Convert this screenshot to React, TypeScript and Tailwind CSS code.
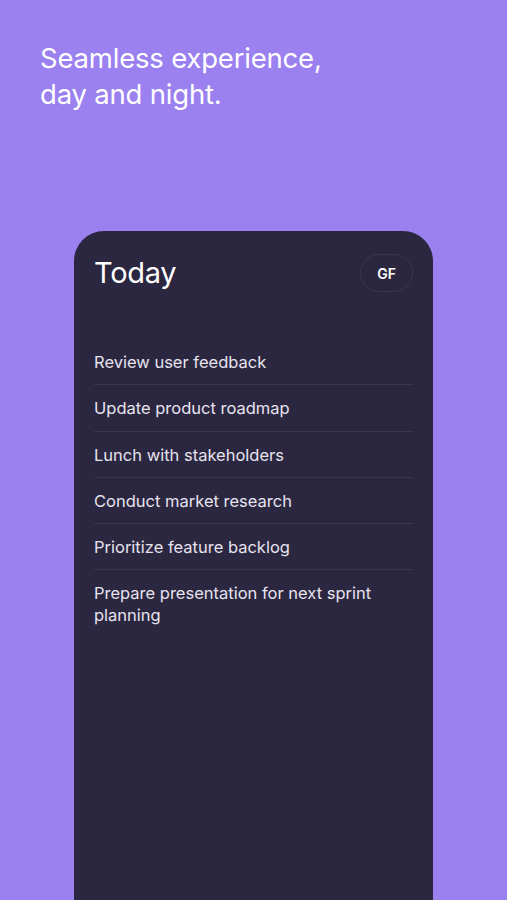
import React from 'react';

const tasks = [
    'Review user feedback',
    'Update product roadmap',
    'Lunch with stakeholders',
    'Conduct market research',
    'Prioritize feature backlog',
    'Prepare presentation for next sprint planning',
];

const App: React.FC = () => {
    return (
        <div
            className="min-h-[900px] h-[900px] overflow-hidden bg-[#9b80f0] flex flex-col"
            style={{ fontFamily: 'Inter, "Noto Sans", sans-serif' }}
        >
            <h1 className="pl-10 pt-[40px] text-[27.5px] leading-[36px] font-normal tracking-[-0.2px] text-white">
                Seamless experience,
                <br />
                day and night.
            </h1>
            <div className="mt-[119px] ml-[74px] w-[359px] flex-1 rounded-t-[30px] bg-[#2c2740] px-5 pt-[23px]">
                <div className="flex items-center justify-between">
                    <h2 className="text-[29px] leading-[38px] font-normal tracking-[-0.3px] text-white">Today</h2>
                    <div className="flex h-[38px] w-[53px] items-center justify-center rounded-full border border-[#3a3550] text-[14px] font-semibold text-white">
                        GF
                    </div>
                </div>
                <ul className="mt-[47px]">
                    {tasks.map((task, i) => (
                        <li
                            key={task}
                            className={`py-3 text-[16.5px] leading-[22px] text-[#e6e3ef] ${i < tasks.length - 1 ? 'border-b border-[#3a3551] pb-[11.3px]' : ''}`}
                        >
                            {task}
                        </li>
                    ))}
                </ul>
            </div>
        </div>
    );
};

export default App;
